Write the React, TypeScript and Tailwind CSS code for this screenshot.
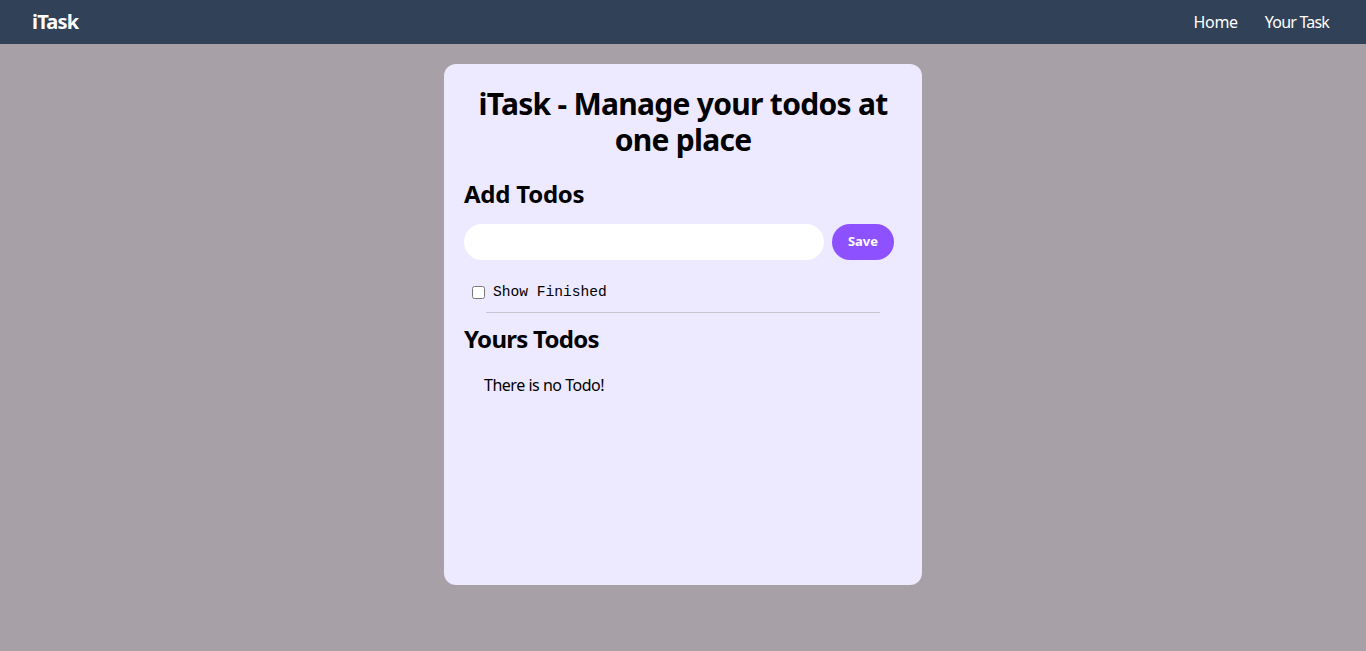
import React, { useState } from 'react';

const App = () => {
  const [todo, setTodo] = useState('');
  const [showFinished, setShowFinished] = useState(false);

  return (
    <div className="min-h-screen bg-[#a7a1a7] font-['Noto_Sans',sans-serif] tracking-[-0.02em]">
      {/* Navbar */}
      <nav className="flex h-11 items-center justify-between bg-slate-700 px-8 text-white">
        <div className="text-xl font-bold tracking-[-0.04em]">iTask</div>
        <ul className="flex gap-[27px] pr-[5px]">
          <li className="cursor-pointer">Home</li>
          <li className="cursor-pointer tracking-[-0.05em]">Your Task</li>
        </ul>
      </nav>

      {/* Card */}
      <div className="mx-auto my-5 min-h-[521px] w-[478px] rounded-xl bg-violet-100 p-5">
        <h1 className="mt-0.5 text-center text-3xl font-bold tracking-[-0.024em]">
          iTask - Manage your todos at one place
        </h1>

        <div className="mt-5 flex flex-col gap-3.5">
          <h2 className="text-2xl font-bold tracking-[-0.01em]">Add Todos</h2>
          <div className="flex">
            <input
              type="text"
              value={todo}
              onChange={(e) => setTodo(e.target.value)}
              className="h-9 w-full rounded-full bg-white px-5 outline-none"
            />
            <button className="mx-2 h-9 w-[62px] shrink-0 rounded-full bg-violet-500 text-[13px] font-bold tracking-normal text-white">
              Save
            </button>
          </div>
        </div>

        <label className="mt-[22px] ml-2 flex items-center gap-2 font-['Liberation_Mono',monospace] text-[14.6px] tracking-normal">
          <input
            type="checkbox"
            checked={showFinished}
            onChange={() => setShowFinished(!showFinished)}
            className="h-[13px] w-[13px]"
          />
          Show Finished
        </label>

        <div className="mx-auto mt-2 h-px w-[90%] bg-[#c8c4d2]"></div>

        <h2 className="mt-[10px] text-2xl font-bold tracking-[-0.03em]">Yours Todos</h2>
        <div className="mt-[18px] ml-5 tracking-[-0.03em]">There is no Todo!</div>
      </div>
    </div>
  );
};

export default App;
